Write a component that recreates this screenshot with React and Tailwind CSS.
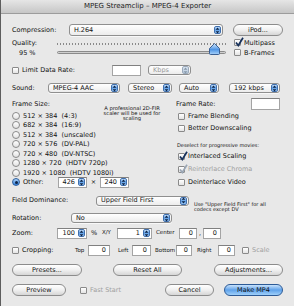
const font = "font-['DejaVu_Sans',sans-serif]";

function Arrows({ color = '#0d2447' }) {
  return (
    <svg width="5" height="7" viewBox="0 0 5 7">
      <path d="M2.5 0.6 L4.4 2.8 H0.6Z M2.5 6.4 L4.4 4.2 H0.6Z" fill={color} />
    </svg>
  );
}

function Blue({ dim }) {
  return (
    <div
      className={`mr-[1px] flex h-[8px] w-[7px] shrink-0 items-center justify-center rounded-[2px] border border-[#3f6fae] ${
        dim ? 'bg-gradient-to-b from-[#dbe6f2] to-[#b8c9dc] border-[#9aa9bb]' : 'bg-gradient-to-b from-[#c5e0fb] via-[#5c9de6] to-[#9fcaf5]'
      }`}
    >
      <Arrows color={dim ? '#8899aa' : '#0d2447'} />
    </div>
  );
}

function Popup({ w, label, h = 'h-[10px]', dim }) {
  return (
    <div className={`flex ${h} ${w} shrink-0 items-center rounded-[3px] border border-[#8f8f8f] bg-gradient-to-b from-white to-[#ececec] shadow-[0_1px_0_#f8f8f8]`}>
      <span className={`flex-1 truncate pl-[4px] ${dim ? 'text-[#9a9a9a]' : ''}`}>{label}</span>
      <Blue dim={dim} />
    </div>
  );
}

function Field({ w, value = '', h = 'h-[11px]' }) {
  return (
    <div className={`flex ${h} ${w} shrink-0 items-center justify-end border border-[#a4a4a4] border-t-[#808080] bg-white pr-[3px]`}>
      {value}
    </div>
  );
}

function NumField({ w, value }) {
  return (
    <div className={`flex h-[11px] ${w} shrink-0 items-center border border-[#a4a4a4] border-t-[#808080] bg-white`}>
      <span className="flex-1 pr-[3px] text-right">{value}</span>
      <Blue />
    </div>
  );
}

function Check({ checked, dim, label, className = '' }) {
  return (
    <div className={`flex items-center ${className}`}>
      <div className="relative h-[7px] w-[7px] shrink-0 rounded-[1px] border border-[#8a8a8a] bg-gradient-to-b from-white to-[#e4e4e4]">
        {checked && (
          <svg className="absolute left-[0px] top-[-3px]" width="9" height="10" viewBox="0 0 9 10">
            <path d="M1 5.5 L3.3 8.5 L8 0.8" fill="none" stroke={dim ? '#9aa6b4' : '#16305a'} strokeWidth="1.7" />
          </svg>
        )}
      </div>
      <span className={`ml-[3px] ${dim ? 'text-[#a0a0a0]' : ''}`}>{label}</span>
    </div>
  );
}

function Radio({ on, label }) {
  return (
    <div className="flex h-[9.5px] items-center">
      <div
        className={`flex h-[8px] w-[8px] shrink-0 items-center justify-center rounded-full border ${
          on ? 'border-[#2e5f9c] bg-gradient-to-b from-[#a9d0f8] to-[#2f7fdc]' : 'border-[#8a8a8a] bg-gradient-to-b from-white to-[#e2e2e2]'
        }`}
      >
        {on && <div className="h-[3px] w-[3px] rounded-full bg-[#0d2447]" />}
      </div>
      <span className="ml-[3px] whitespace-pre">{label}</span>
    </div>
  );
}

function Button({ w, label, primary }) {
  return (
    <div
      className={`flex h-[12px] ${w} shrink-0 items-center justify-center rounded-full border ${
        primary
          ? 'border-[#2c5a96] bg-gradient-to-b from-[#c8e2fb] via-[#5fa2ea] to-[#9fd0fa]'
          : 'border-[#8c8c8c] bg-gradient-to-b from-white via-[#f0f0f0] to-[#d6d6d6]'
      }`}
    >
      {label}
    </div>
  );
}

function Slider() {
  return (
    <div className="relative h-full w-[169px] shrink-0">
      <div className="mt-[5px] h-[2px] w-full bg-[repeating-linear-gradient(90deg,#8a8a8a_0_1px,transparent_1px_3px)]" />
      <div className="mt-[6px] h-[3px] w-full rounded-full border border-[#8a8a8a] bg-[#cfcfcf]" />
      <svg className="absolute left-[152px] top-[5px]" width="11" height="12" viewBox="0 0 11 12">
        <defs>
          <linearGradient id="th" x1="0" y1="0" x2="0" y2="1">
            <stop offset="0" stopColor="#d6ebfd" />
            <stop offset="0.55" stopColor="#4f95e4" />
            <stop offset="1" stopColor="#a9d3fb" />
          </linearGradient>
        </defs>
        <path d="M5.5 0.5 L10.5 5.5 V10.5 Q10.5 11.5 9.5 11.5 H1.5 Q0.5 11.5 0.5 10.5 V5.5 Z" fill="url(#th)" stroke="#3a5f92" />
      </svg>
    </div>
  );
}

export default function App() {
  return (
    <div className={`h-[306px] w-[294px] overflow-hidden border-l border-[#5d5d5d] bg-[#e8e8e8] text-[6.5px] leading-none text-[#111] ${font}`}>
      {/* Title bar */}
      <div className="flex h-[14px] items-center justify-center rounded-t-[4px] border-b border-[#9c9c9c] bg-gradient-to-b from-[#e6e6e6] to-[#c6c6c6] text-[7px] text-[#222]">
        MPEG Streamclip – MPEG-4 Exporter
      </div>

      <div className="pl-[11px]">
        {/* Compression */}
        <div className="mt-[9px] flex h-[14px] items-center">
          <span className="w-[57px] shrink-0">Compression:</span>
          <Popup w="w-[154px]" h="h-[12px]" label="H.264" />
          <div className="ml-[10px]">
            <Button w="w-[50px]" label="iPod..." />
          </div>
        </div>

        {/* Quality */}
        <div className="mt-[1px] flex h-[20px]">
          <div className="flex w-[45px] shrink-0 flex-col">
            <span className="flex h-[10px] items-center">Quality:</span>
            <span className="flex h-[10px] items-center pl-[7px]">95 %</span>
          </div>
          <Slider />
          <div className="ml-[8px] flex flex-col">
            <Check checked label="Multipass" className="h-[10px]" />
            <Check label="B-Frames" className="h-[11px]" />
          </div>
        </div>

        {/* Limit data rate */}
        <div className="mt-[6px] flex h-[12px] items-center">
          <div className="w-[100px] shrink-0">
            <Check label="Limit Data Rate:" />
          </div>
          <Field w="w-[29px]" />
          <div className="ml-[7px]">
            <Popup w="w-[43px]" label="Kbps" dim />
          </div>
        </div>

        {/* Sound */}
        <div className="mt-[7px] flex h-[10px] items-center">
          <span className="w-[36px] shrink-0">Sound:</span>
          <Popup w="w-[72px]" label="MPEG-4 AAC" />
          <div className="ml-[8px]">
            <Popup w="w-[44px]" label="Stereo" />
          </div>
          <div className="ml-[7px]">
            <Popup w="w-[40px]" label="Auto" />
          </div>
          <div className="ml-[10px]">
            <Popup w="w-[51px]" label="192 kbps" />
          </div>
        </div>

        {/* Frame size / options */}
        <div className="mt-[5px] flex h-[90px]">
          <div className="w-[88px] shrink-0">
            <div className="flex h-[12px] items-center">Frame Size:</div>
            <div className="mt-[1px]">
              <Radio label="512 × 384  (4:3)" />
              <Radio label="682 × 384  (16:9)" />
              <Radio label="512 × 384  (unscaled)" />
              <Radio label="720 × 576  (DV-PAL)" />
              <Radio label="720 × 480  (DV-NTSC)" />
              <Radio label="1280 × 720  (HDTV 720p)" />
              <Radio label="1920 × 1080  (HDTV 1080i)" />
              <div className="flex h-[9.5px] items-center">
                <div className="w-[46px] shrink-0">
                  <Radio on label="Other:" />
                </div>
                <NumField w="w-[29px]" value="426" />
                <span className="w-[13px] shrink-0 text-center">×</span>
                <NumField w="w-[29px]" value="240" />
              </div>
            </div>
          </div>

          <div className="mt-[8px] w-[64px] shrink-0 text-center text-[5.2px] leading-[5px]">
            A professional 2D-FIR
            <br />
            scaler will be used for
            <br />
            scaling
          </div>

          <div className="ml-[12px] w-[104px] shrink-0">
            <div className="flex h-[12px] items-center justify-between">
              <span>Frame Rate:</span>
              <Field w="w-[29px]" h="h-[12px]" />
            </div>
            <Check label="Frame Blending" className="h-[12px] pl-[2px]" />
            <Check label="Better Downscaling" className="h-[12px] pl-[2px]" />
            <div className="mt-[6px] flex h-[10px] items-center pl-[1px] text-[5px]">Deselect for progressive movies:</div>
            <Check checked label="Interlaced Scaling" className="h-[13px] pl-[2px]" />
            <Check checked dim label="Reinterlace Chroma" className="h-[13px] pl-[2px]" />
            <Check label="Deinterlace Video" className="h-[13px] pl-[2px]" />
          </div>
        </div>

        {/* Field dominance */}
        <div className="mt-[7px] flex h-[11px] items-center">
          <span className="w-[84px] shrink-0">Field Dominance:</span>
          <Popup w="w-[93px]" label="Upper Field First" />
          <div className="ml-[5px] mt-[7px] self-start text-[5px] leading-[5px]">
            Use "Upper Field First" for all
            <br />
            codecs except DV
          </div>
        </div>

        {/* Rotation */}
        <div className="mt-[7px] flex h-[10px] items-center">
          <span className="w-[59px] shrink-0">Rotation:</span>
          <Popup w="w-[101px]" label="No" />
        </div>

        {/* Zoom */}
        <div className="mt-[4px] flex h-[12px] items-center">
          <span className="w-[45px] shrink-0">Zoom:</span>
          <NumField w="w-[30px]" value="100" />
          <span className="w-[15px] shrink-0 pl-[4px]">%</span>
          <span className="w-[15px] shrink-0 text-[5.5px]">X/Y</span>
          <NumField w="w-[35px]" value="1" />
          <span className="w-[27px] shrink-0 pl-[4px] text-[5.5px]">Center</span>
          <Field w="w-[18px]" value="0" />
          <span className="w-[6px] shrink-0 text-center">,</span>
          <Field w="w-[18px]" value="0" />
        </div>

        {/* Cropping */}
        <div className="mt-[6px] flex h-[11px] items-center">
          <div className="w-[63px] shrink-0">
            <Check label="Cropping:" />
          </div>
          <span className="w-[13px] shrink-0 text-[5.5px]">Top</span>
          <Field w="w-[22px]" value="0" />
          <span className="w-[22px] shrink-0 pl-[8px] text-[5.5px]">Left</span>
          <Field w="w-[19px]" value="0" />
          <span className="w-[25px] shrink-0 pl-[4px] text-[5.5px]">Bottom</span>
          <Field w="w-[16px]" value="0" />
          <span className="w-[26px] shrink-0 pl-[5px] text-[5.5px]">Right</span>
          <Field w="w-[17px]" value="0" />
          <Check dim label="Scale" className="ml-[7px]" />
        </div>

        {/* Buttons */}
        <div className="mt-[8px] flex h-[12px] items-center">
          <Button w="w-[70px]" label="Presets..." />
          <div className="ml-[31px]">
            <Button w="w-[69px]" label="Reset All" />
          </div>
          <div className="ml-[32px]">
            <Button w="w-[69px]" label="Adjustments..." />
          </div>
        </div>

        <div className="mt-[8px] flex h-[12px] items-center">
          <Button w="w-[54px]" label="Preview" />
          <div className="ml-[14px] w-[85px] shrink-0">
            <Check dim label="Fast Start" />
          </div>
          <Button w="w-[49px]" label="Cancel" />
          <div className="ml-[10px]">
            <Button w="w-[59px]" label="Make MP4" primary />
          </div>
        </div>
      </div>
    </div>
  );
}
